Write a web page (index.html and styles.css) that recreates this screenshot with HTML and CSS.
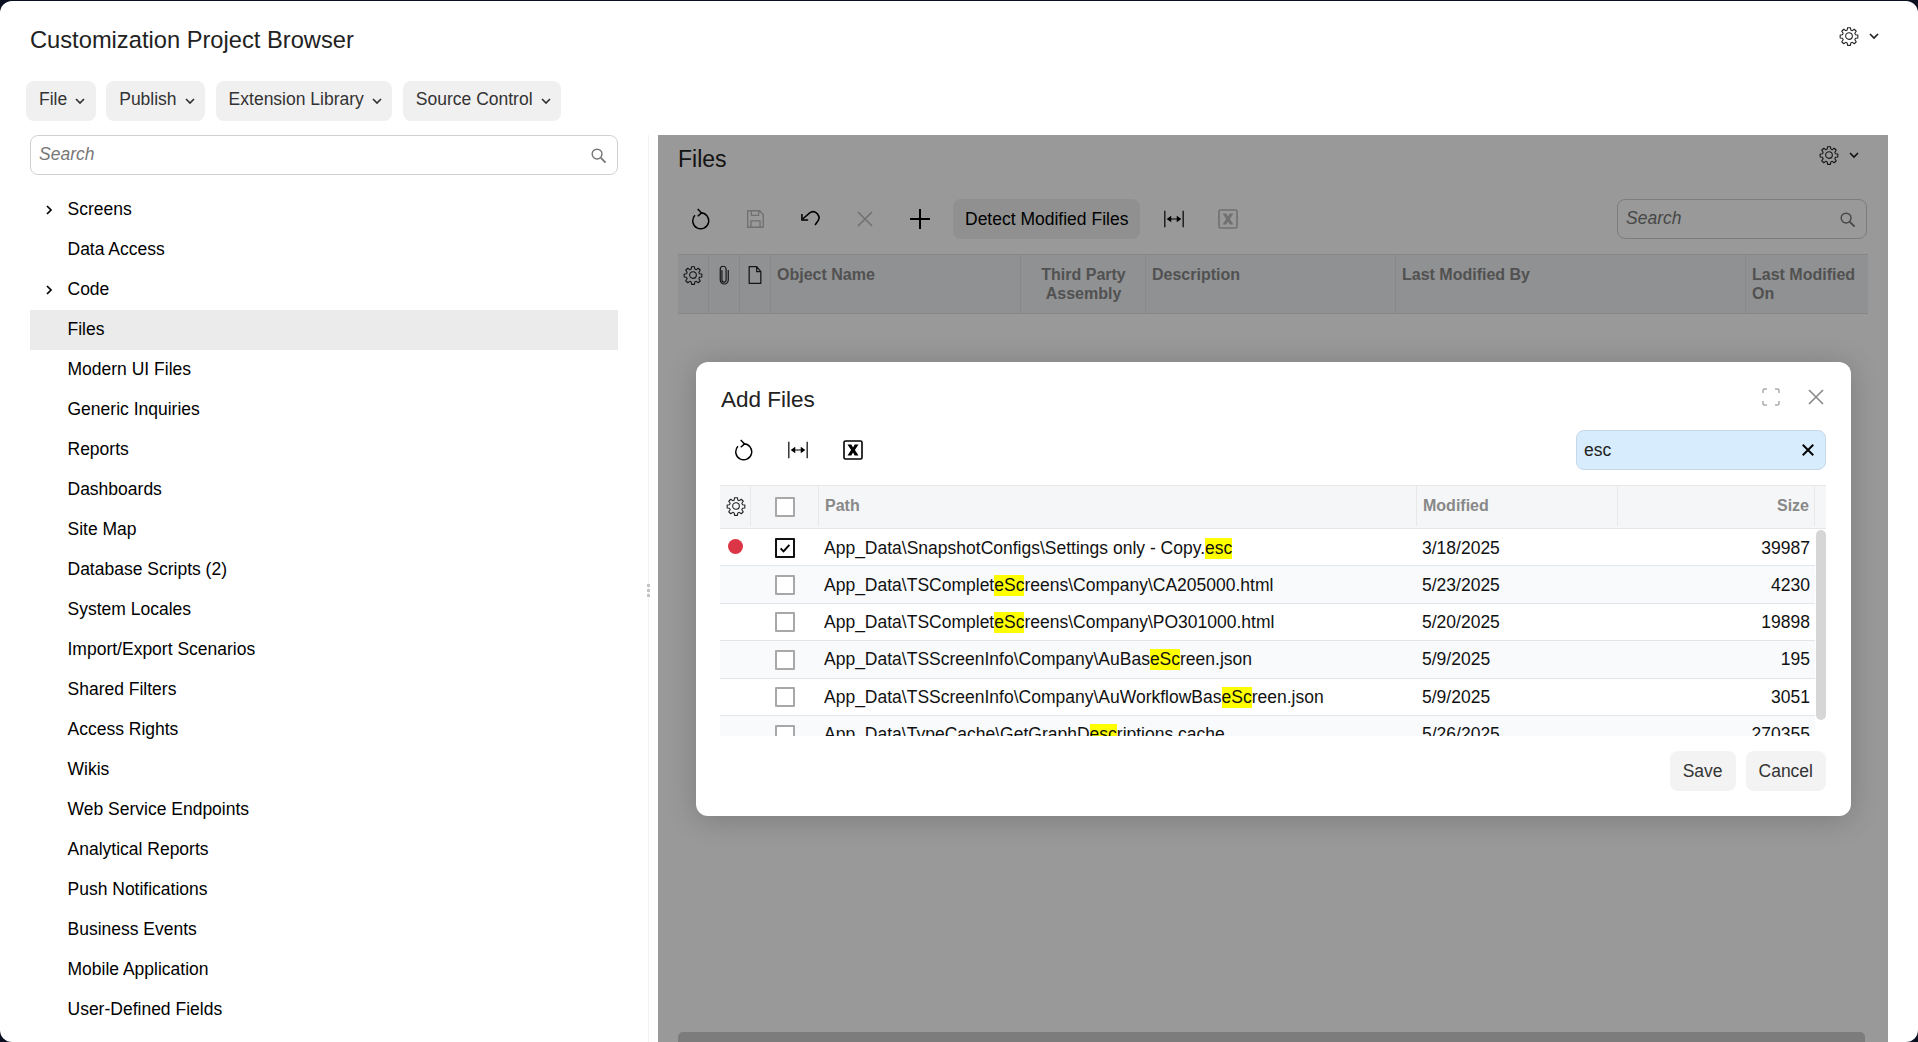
FILE: index.html
```html
<!DOCTYPE html>
<html lang="en">
<head>
<meta charset="utf-8">
<title>Customization Project Browser</title>
<link rel="stylesheet" href="styles.css">
</head>
<body>
<svg class="defs" width="0" height="0" aria-hidden="true">
  <defs>
    <symbol id="gear" viewBox="0 0 24 24"><path fill="none" stroke="currentColor" stroke-width="1.3" stroke-linejoin="round" d="M10.3 2h3.4l.5 2.9 1.7.7 2.4-1.7 2.4 2.4-1.7 2.4.7 1.7 2.9.5v3.4l-2.9.5-.7 1.7 1.7 2.4-2.4 2.4-2.4-1.7-1.7.7-.5 2.9h-3.4l-.5-2.9-1.7-.7-2.4 1.7-2.4-2.4 1.7-2.4-.7-1.7-2.9-.5v-3.4l2.9-.5.7-1.7-1.7-2.4 2.4-2.4 2.4 1.7 1.7-.7z"/><circle cx="12" cy="12" r="4" fill="none" stroke="currentColor" stroke-width="1.3"/></symbol>
    <symbol id="chev" viewBox="0 0 12 12"><path fill="none" stroke="currentColor" stroke-width="1.7" d="M2 4l4 4 4-4"/></symbol>
    <symbol id="chevr" viewBox="0 0 12 12"><path fill="none" stroke="currentColor" stroke-width="1.7" d="M4 2l4 4-4 4"/></symbol>
    <symbol id="search" viewBox="0 0 18 18"><circle cx="7.5" cy="7.5" r="5.2" fill="none" stroke="currentColor" stroke-width="1.5"/><path stroke="currentColor" stroke-width="2" d="M11.5 11.5l5 5"/></symbol>
    <symbol id="refresh" viewBox="0 0 24 24"><path fill="none" stroke="currentColor" stroke-width="1.6" d="M6.500 8A8.700 8.700 0 1 0 12.500 5.300"/><path fill="none" stroke="currentColor" stroke-width="1.6" d="M9.500 1.200l4.200 4.100-4.200 3.700"/></symbol>
    <symbol id="save" viewBox="0 0 24 24"><path fill="none" stroke="currentColor" stroke-width="1.5" stroke-linejoin="round" d="M4 3h13l4 4v14H4zM8 3v5h8V3M7.500 21v-7h10v7"/></symbol>
    <symbol id="undo" viewBox="0 0 24 24"><path fill="none" stroke="currentColor" stroke-width="1.7" d="M4 12L12 5a6.500 6.500 0 0 1 8 10l-2.500 3.500"/><path fill="none" stroke="currentColor" stroke-width="1.700" d="M3.200 6.500V13H10"/></symbol>
    <symbol id="close" viewBox="0 0 20 20"><path fill="none" stroke="currentColor" stroke-width="1.6" d="M3 3l14 14M17 3L3 17"/></symbol>
    <symbol id="clear" viewBox="0 0 16 16"><path fill="none" stroke="currentColor" stroke-width="2.200" d="M2 2l12 12M14 2L2 14"/></symbol>
    <symbol id="plus" viewBox="0 0 20 20"><path fill="none" stroke="currentColor" stroke-width="1.800" d="M10 1v18M1 10h18"/></symbol>
    <symbol id="fit" viewBox="0 0 24 24"><path fill="none" stroke="currentColor" stroke-width="1.300" d="M2 3v18M22 3v18M7 12h10"/><path fill="currentColor" d="M4 12l5-3.500v7zM20 12l-5-3.500v7z"/></symbol>
    <symbol id="excel" viewBox="0 0 20 20"><rect x="1" y="1" width="18" height="18" rx="1.500" fill="none" stroke="currentColor" stroke-width="1.600"/><path fill="currentColor" d="M4.500 4.500h3.800l1.700 3 1.700-3h3.800l-3.600 5.500 3.600 5.500h-3.800l-1.700-3-1.700 3H4.500l3.600-5.500z"/></symbol>
    <symbol id="clip" viewBox="0 0 14 24"><path fill="none" stroke="currentColor" stroke-width="1.400" d="M4.500 6v12a2.500 2.500 0 0 0 5 0V5a3.500 3.500 0 0 0-7 0v13a4.800 4.800 0 0 0 9.600 0V6"/></symbol>
    <symbol id="doc" viewBox="0 0 18 24"><path fill="none" stroke="currentColor" stroke-width="1.500" stroke-linejoin="round" d="M2 2h9l5 6v14H2zM11 2v6h5"/></symbol>
    <symbol id="expand" viewBox="0 0 20 20"><path fill="none" stroke="currentColor" stroke-width="1.500" d="M2 6V3.500A1.500 1.500 0 0 1 3.500 2H6M14 2h2.500A1.500 1.500 0 0 1 18 3.500V6M18 14v2.500a1.500 1.500 0 0 1-1.500 1.500H14M6 18H3.500A1.500 1.500 0 0 1 2 16.500V14"/></symbol>
    <symbol id="check" viewBox="0 0 16 16"><path fill="none" stroke="currentColor" stroke-width="2.200" d="M3 8.500l3.300 3.300L13 4.500"/></symbol>
  </defs>
</svg>

<div class="app">
  <header class="top">
    <div class="top-row">
      <h1 class="title">Customization Project Browser</h1>
      <button class="gear-menu"><svg class="i-gear"><use href="#gear"/></svg><svg class="i-chev"><use href="#chev"/></svg></button>
    </div>
    <nav class="menu">
      <button class="menu-btn">File<svg class="i-chev"><use href="#chev"/></svg></button>
      <button class="menu-btn">Publish<svg class="i-chev"><use href="#chev"/></svg></button>
      <button class="menu-btn">Extension Library<svg class="i-chev"><use href="#chev"/></svg></button>
      <button class="menu-btn">Source Control<svg class="i-chev"><use href="#chev"/></svg></button>
    </nav>
  </header>

  <div class="split">
    <aside class="side">
      <div class="search side-search"><span class="ph">Search</span><svg class="i-search"><use href="#search"/></svg></div>
      <ul class="tree">
        <li class="node"><svg class="i-chevr"><use href="#chevr"/></svg>Screens</li>
        <li class="node">Data Access</li>
        <li class="node"><svg class="i-chevr"><use href="#chevr"/></svg>Code</li>
        <li class="node on">Files</li>
        <li class="node">Modern UI Files</li>
        <li class="node">Generic Inquiries</li>
        <li class="node">Reports</li>
        <li class="node">Dashboards</li>
        <li class="node">Site Map</li>
        <li class="node">Database Scripts (2)</li>
        <li class="node">System Locales</li>
        <li class="node">Import/Export Scenarios</li>
        <li class="node">Shared Filters</li>
        <li class="node">Access Rights</li>
        <li class="node">Wikis</li>
        <li class="node">Web Service Endpoints</li>
        <li class="node">Analytical Reports</li>
        <li class="node">Push Notifications</li>
        <li class="node">Business Events</li>
        <li class="node">Mobile Application</li>
        <li class="node">User-Defined Fields</li>
      </ul>
    </aside>

    <div class="divider"><span class="grip"></span></div>

    <main class="panel">
      <div class="panel-head">
        <h2 class="panel-title">Files</h2>
        <button class="gear-menu"><svg class="i-gear"><use href="#gear"/></svg><svg class="i-chev"><use href="#chev"/></svg></button>
      </div>
      <div class="panel-bar">
        <svg class="tool"><use href="#refresh"/></svg>
        <svg class="tool off"><use href="#save"/></svg>
        <svg class="tool"><use href="#undo"/></svg>
        <svg class="tool off sm x"><use href="#close"/></svg>
        <svg class="tool add"><use href="#plus"/></svg>
        <button class="detect">Detect Modified Files</button>
        <svg class="tool"><use href="#fit"/></svg>
        <svg class="tool off sm"><use href="#excel"/></svg>
        <div class="search panel-search"><span class="ph">Search</span><svg class="i-search"><use href="#search"/></svg></div>
      </div>
      <div class="grid-head">
        <div class="gh gh-icon"><svg class="i-gear"><use href="#gear"/></svg></div>
        <div class="gh gh-icon"><svg class="i-clip"><use href="#clip"/></svg></div>
        <div class="gh gh-icon"><svg class="i-doc"><use href="#doc"/></svg></div>
        <div class="gh">Object Name</div>
        <div class="gh center">Third Party Assembly</div>
        <div class="gh">Description</div>
        <div class="gh">Last Modified By</div>
        <div class="gh">Last Modified On</div>
      </div>
      <div class="hscroll"></div>
      <div class="scrim"></div>

      <section class="dialog">
        <div class="dlg-head">
          <h3 class="dlg-title">Add Files</h3>
          <svg class="i-expand"><use href="#expand"/></svg>
          <svg class="i-close"><use href="#close"/></svg>
        </div>
        <div class="dlg-bar">
          <svg class="tool"><use href="#refresh"/></svg>
          <svg class="tool"><use href="#fit"/></svg>
          <svg class="tool sm"><use href="#excel"/></svg>
          <div class="dlg-search"><span>esc</span><svg class="i-clear"><use href="#clear"/></svg></div>
        </div>
        <div class="table">
          <div class="thead">
            <div class="th th-gear"><svg class="i-gear"><use href="#gear"/></svg></div>
            <div class="th th-check"><span class="box"></span></div>
            <div class="th">Path</div>
            <div class="th">Modified</div>
            <div class="th right">Size</div>
          </div>
          <div class="tbody">
            <div class="tr">
              <div class="td td-dot"><span class="dot"></span></div>
              <div class="td td-check"><span class="box checked"><svg class="i-check"><use href="#check"/></svg></span></div>
              <div class="td">App_Data\SnapshotConfigs\Settings only - Copy.<mark>esc</mark></div>
              <div class="td">3/18/2025</div>
              <div class="td right">39987</div>
            </div>
            <div class="tr">
              <div class="td td-dot"></div>
              <div class="td td-check"><span class="box"></span></div>
              <div class="td">App_Data\TSComplet<mark>eSc</mark>reens\Company\CA205000.html</div>
              <div class="td">5/23/2025</div>
              <div class="td right">4230</div>
            </div>
            <div class="tr">
              <div class="td td-dot"></div>
              <div class="td td-check"><span class="box"></span></div>
              <div class="td">App_Data\TSComplet<mark>eSc</mark>reens\Company\PO301000.html</div>
              <div class="td">5/20/2025</div>
              <div class="td right">19898</div>
            </div>
            <div class="tr">
              <div class="td td-dot"></div>
              <div class="td td-check"><span class="box"></span></div>
              <div class="td">App_Data\TSScreenInfo\Company\AuBas<mark>eSc</mark>reen.json</div>
              <div class="td">5/9/2025</div>
              <div class="td right">195</div>
            </div>
            <div class="tr">
              <div class="td td-dot"></div>
              <div class="td td-check"><span class="box"></span></div>
              <div class="td">App_Data\TSScreenInfo\Company\AuWorkflowBas<mark>eSc</mark>reen.json</div>
              <div class="td">5/9/2025</div>
              <div class="td right">3051</div>
            </div>
            <div class="tr">
              <div class="td td-dot"></div>
              <div class="td td-check"><span class="box"></span></div>
              <div class="td">App_Data\TypeCache\GetGraphD<mark>esc</mark>riptions.cache</div>
              <div class="td">5/26/2025</div>
              <div class="td right">270355</div>
            </div>
            <div class="vscroll"></div>
          </div>
        </div>
        <div class="dlg-foot">
          <button class="foot-btn save">Save</button>
          <button class="foot-btn cancel">Cancel</button>
        </div>
      </section>
    </main>
  </div>
</div>
</body>
</html>
```

FILE: styles.css
```css
* { box-sizing: border-box; }
html, body { margin: 0; height: 100%; }
body {
  background: #0b1020;
  font-family: "Liberation Sans", Arial, sans-serif;
  font-size: 17.5px;
  color: #000;
  overflow: hidden;
}
.defs { position: absolute; }
button { font: inherit; color: inherit; border: 0; background: none; padding: 0; }
h1, h2, h3, ul { margin: 0; padding: 0; font-weight: 400; list-style: none; }

.app {
  margin-top: 1px;
  height: 1041px;
  background: #fff;
  border-radius: 12px;
  display: flex;
  flex-direction: column;
  overflow: hidden;
}

.top { height: 134px; padding: 0 0 0 26px; flex: none; }
.top-row { height: 80px; display: flex; justify-content: space-between; padding: 23px 38px 0 4px; align-items: flex-start; }
.title { font-size: 23.700px; line-height: 32px; color: #222; }
.gear-menu { display: flex; align-items: center; gap: 9px; color: #222; margin-top: 2px; }
.i-gear { width: 20px; height: 20px; }
.i-chev { width: 12px; height: 12px; }

.menu { display: flex; gap: 10.500px; }
.menu-btn {
  height: 40px;
  padding: 0 9.500px 3px 13px;
  border-radius: 8px;
  background: #f0f0f0;
  color: #333;
  display: flex;
  align-items: center;
  gap: 7px;
  white-space: nowrap;
}
.menu-btn .i-chev { margin-top: 3px; }

.split { flex: 1; display: flex; min-height: 0; padding-right: 30px; }

.side { width: 618px; flex: none; padding-left: 30px; overflow: hidden; }
.search {
  height: 40px;
  border: 1px solid #d0d0d0;
  border-radius: 8px;
  display: flex;
  align-items: center;
  justify-content: space-between;
  padding: 0 10px 1px 8px;
  background: transparent;
}
.search .i-search { margin-top: 1px; }
.ph { font-style: italic; color: #777; }
.i-search { width: 17px; height: 17px; color: #777; }
.tree { margin-top: 15px; }
.node {
  height: 40px;
  padding: 0 0 1px 37.500px;
  display: flex;
  align-items: center;
  position: relative;
  white-space: nowrap;
}
.node.on { background: #ebebeb; }
.i-chevr { width: 12px; height: 12px; position: absolute; left: 13px; top: 14px; }

.divider { width: 40px; flex: none; position: relative; }
.divider::after {
  content: "";
  position: absolute;
  left: 30px; top: 0; bottom: 0; width: 1px;
  background: #f2f2f2;
}
.grip {
  position: absolute;
  z-index: 1;
  left: 29px; top: 449px;
  width: 3px; height: 13px;
  background: repeating-linear-gradient(#c4c4c4 0 3px, transparent 3px 5px);
}

.panel { flex: 1; position: relative; padding: 0 20px; min-width: 0; }
.panel-head { height: 64px; display: flex; justify-content: space-between; align-items: flex-start; padding: 8px 8px 0 0; }
.panel-title { font-size: 23px; line-height: 34px; color: #222; margin-top: -1px; }
.panel-bar { height: 40px; display: flex; align-items: center; position: relative; }
.tool { width: 22px; height: 22px; flex: none; color: #000; margin-left: 11px; margin-right: 22px; }
.tool.off { color: #bcbcbc; }
.tool.sm { width: 20px; height: 20px; }
.tool.x { margin-left: 12px; margin-right: 23px; }
.tool.add { margin-right: 21px; }
.detect {
  height: 40px;
  padding: 0 12px;
  border-radius: 8px;
  background: #f0f0f0;
  white-space: nowrap;
  margin-left: 1px;
  margin-right: 12px;
}
.panel-search { width: 250px; margin-left: auto; margin-right: 1px; }

.grid-head {
  margin-top: 15px;
  height: 60px;
  display: grid;
  grid-template-columns: 31px 31px 31px 250px 125px 250px 350px 1fr;
  background: #f0f2f5;
  border-top: 1px solid #e0e0e0;
  border-bottom: 1px solid #e0e0e0;
  font-size: 16px;
  line-height: 19px;
  font-weight: 700;
  color: #888;
}
.gh { padding: 10px 5px 0 6px; border-right: 1px solid #e4e4e4; }
.gh:last-child { border-right: 0; }
.gh-icon { padding: 10px 0 0; display: flex; justify-content: center; color: #222; }
.center { text-align: center; }
.i-clip { width: 12px; height: 20px; }
.i-doc { width: 16px; height: 20px; }

.hscroll {
  position: absolute;
  left: 20px; right: 23px; bottom: 0;
  height: 10px;
  border-radius: 5px 5px 0 0;
  background: #cfcfcf;
}

.scrim { position: absolute; inset: 0; background: rgba(0, 0, 0, .4); }

.dialog {
  position: absolute;
  left: 38px; top: 227px;
  width: 1155px; height: 454px;
  background: #fff;
  border-radius: 12px;
  box-shadow: 0 3px 30px rgba(0, 0, 0, .2);
  padding: 0 25px 0 24px;
  display: flex;
  flex-direction: column;
}
.dlg-head { height: 68px; display: flex; align-items: center; padding-top: 8px; }
.dlg-title { font-size: 22.500px; line-height: 30px; color: #222; flex: 1; padding-left: 1px; }
.i-expand { width: 20px; height: 20px; color: #aaa; margin-top: -6px; margin-right: 25px; }
.i-close { width: 20px; height: 20px; color: #888; margin-top: -6px; margin-right: 0; }
.dlg-bar { height: 40px; display: flex; align-items: center; }
.dlg-search {
  width: 250px; height: 40px; margin-left: auto;
  background: #d7ecfd;
  border: 1px solid #c6d8e8;
  border-radius: 8px;
  display: flex; align-items: center; justify-content: space-between;
  padding: 0 10px 0 7px;
  color: #222;
}
.i-clear { width: 14px; height: 14px; color: #000; }
.dlg-bar .tool { margin-left: 12px; margin-right: 21px; }
.dlg-bar .tool.sm { margin-left: 13px; }

.table { margin-top: 15px; height: 251px; overflow: hidden; }
.thead, .tr {
  display: grid;
  grid-template-columns: 31px 68px 598px 201px 197px;
}
.thead {
  height: 44px;
  padding-bottom: 2px;
  background: #f5f6f7;
  border-top: 1px solid #e8e8e8;
  border-bottom: 1px solid #e4e6e8;
  font-size: 16px;
  font-weight: 700;
  color: #888;
}
.th { display: flex; align-items: center; padding: 0 6px; border-right: 1px solid #e8e8e8; }
.th:last-child { justify-content: flex-end; padding-right: 5px; }
.th-gear { padding: 0 0 0 2px; justify-content: center; color: #222; }
.th-check { padding: 2px 0 0; justify-content: center; }
.tbody { position: relative; height: 207px; overflow: hidden; }
.tr { height: 37.400px; border-bottom: 1px solid #e2e6ea; margin-right: 11px; }
.tr:nth-child(even) { background: #f8fafc; }
.td { display: flex; align-items: center; padding: 1px 5px 0; white-space: nowrap; color: #111; }
.tr:first-child .td:nth-child(n+3) { padding-top: 2px; }
.td mark { background: #ff0; color: inherit; }
.td.right { justify-content: flex-end; padding-right: 5px; }
.td-dot { padding: 0; justify-content: center; }
.td-check { padding: 1px 0 0; justify-content: center; }
.dot { width: 15px; height: 15px; border-radius: 50%; background: #dc3545; margin-top: -2px; }
.box {
  width: 20px; height: 20px;
  border: 2px solid #a8a8a8;
  border-radius: 1px;
  background: #fff;
  display: flex; align-items: center; justify-content: center;
}
.box.checked { border-color: #111; }
.i-check { width: 14px; height: 14px; color: #000; }
.vscroll {
  position: absolute;
  right: 0; top: 1px;
  width: 10px; height: 190px;
  background: #d6d6d6;
  border-radius: 5px;
}

.dlg-foot { flex: 1; display: flex; justify-content: flex-end; gap: 10px; padding-top: 15px; }
.foot-btn { height: 40px; padding: 0 13px; border-radius: 8px; background: #f3f3f3; color: #333; }
```
